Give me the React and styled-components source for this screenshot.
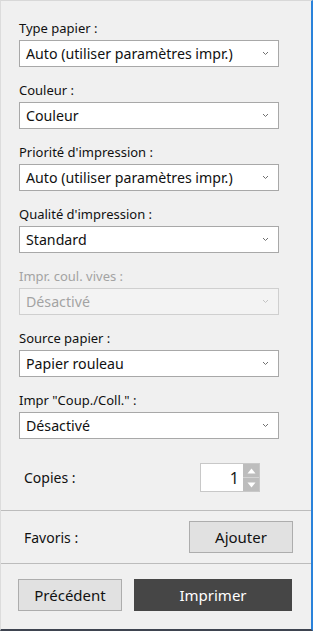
import React from "react";
import styled, { createGlobalStyle } from "styled-components";

const Global = createGlobalStyle`
  html, body { margin: 0; padding: 0; background: #f0f0f0; }
  body { font-family: "Noto Sans", "Liberation Sans", sans-serif; color: #1a1a1a; }
  * { box-sizing: border-box; }
`;

const Frame = styled.div`
  width: 313px;
  height: 631px;
  background: #f0f0f0;
  border-top: 1px solid #d8d8d8;
  border-left: 1px solid #dcdcdc;
  border-right: 2px solid #2a82da;
  border-bottom: 2px solid #3e4450;
  display: flex;
  flex-direction: column;
`;

const Fields = styled.div`
  display: flex;
  flex-direction: column;
  gap: 14px;
  padding: 18px 0 0 18px;
`;

const Field = styled.div`
  display: flex;
  flex-direction: column;
  gap: 3px;
`;

const Label = styled.div`
  font-size: 13px;
  line-height: 18px;
  height: 18px;
  color: ${(p) => (p.disabled ? "#a3a3a3" : "#111")};
`;

const Combo = styled.div`
  width: 260px;
  height: 27px;
  display: flex;
  align-items: center;
  justify-content: space-between;
  padding: 0 9px 0 6px;
  background: ${(p) => (p.disabled ? "#f3f3f3" : "#ffffff")};
  border: 1px solid ${(p) => (p.disabled ? "#cfcfcf" : "#a8a8a8")};
  font-size: 14.2px;
  color: ${(p) => (p.disabled ? "#a3a3a3" : "#111")};
`;

const Chevron = ({ disabled }) => (
  <svg width="7" height="5" viewBox="0 0 7 5">
    <polyline
      points="1,1 3.5,3.5 6,1"
      fill="none"
      stroke={disabled ? "#c4c4c4" : "#707070"}
      strokeWidth="1"
    />
  </svg>
);

const CopiesRow = styled.div`
  display: flex;
  align-items: center;
  justify-content: space-between;
  margin-top: 24px;
  padding: 0 51px 0 23px;
  height: 29px;
  margin-bottom: 18px;
`;

const RowLabel = styled.div`
  font-size: 14px;
  color: #111;
`;

const Spin = styled.div`
  width: 60px;
  height: 29px;
  display: flex;
  border: 1px solid #c8c8c8;
  background: #fff;
`;

const SpinValue = styled.div`
  flex: 1;
  display: flex;
  align-items: center;
  justify-content: flex-end;
  padding-right: 4px;
  font-size: 16px;
`;

const SpinButtons = styled.div`
  width: 16px;
  display: flex;
  flex-direction: column;
  background: #bdbdbd;
`;

const SpinBtn = styled.div`
  flex: 1;
  display: flex;
  align-items: center;
  justify-content: center;
  border-top: ${(p) => (p.down ? "1px solid #d4d4d4" : "none")};
`;

const Separator = styled.div`
  height: 1px;
  background: #bcbcbc;
`;

const FavRow = styled.div`
  display: flex;
  align-items: center;
  justify-content: space-between;
  padding: 10px 18px 10px 23px;
`;

const Button = styled.button`
  height: 32px;
  width: ${(p) => p.w}px;
  font-family: "Noto Sans", "Liberation Sans", sans-serif;
  font-size: 15px;
  color: ${(p) => (p.primary ? "#ffffff" : "#111")};
  background: ${(p) => (p.primary ? "#464646" : "#e1e1e1")};
  border: 1px solid ${(p) => (p.primary ? "#464646" : "#adadad")};
  padding: 0;
  margin: 0;
  cursor: pointer;
`;

const Footer = styled.div`
  display: flex;
  gap: 12px;
  padding: 15px 0 0 17px;
`;

const fields = [
  { label: "Type papier :", value: "Auto (utiliser paramètres impr.)" },
  { label: "Couleur :", value: "Couleur" },
  { label: "Priorité d'impression :", value: "Auto (utiliser paramètres impr.)" },
  { label: "Qualité d'impression :", value: "Standard" },
  { label: "Impr. coul. vives :", value: "Désactivé", disabled: true },
  { label: "Source papier :", value: "Papier rouleau" },
  { label: 'Impr "Coup./Coll." :', value: "Désactivé" },
];

export default function App() {
  return (
    <>
      <Global />
      <Frame>
        <Fields>
          {fields.map((f) => (
            <Field key={f.label}>
              <Label disabled={f.disabled}>{f.label}</Label>
              <Combo disabled={f.disabled}>
                <span>{f.value}</span>
                <Chevron disabled={f.disabled} />
              </Combo>
            </Field>
          ))}
        </Fields>
        <CopiesRow>
          <RowLabel>Copies :</RowLabel>
          <Spin>
            <SpinValue>1</SpinValue>
            <SpinButtons>
              <SpinBtn>
                <svg width="9" height="6" viewBox="0 0 9 6">
                  <polygon points="0.5,5.5 4.5,0.5 8.5,5.5" fill="#fff" />
                </svg>
              </SpinBtn>
              <SpinBtn down>
                <svg width="9" height="6" viewBox="0 0 9 6">
                  <polygon points="0.5,0.5 8.5,0.5 4.5,5.5" fill="#fff" />
                </svg>
              </SpinBtn>
            </SpinButtons>
          </Spin>
        </CopiesRow>
        <Separator />
        <FavRow>
          <RowLabel>Favoris :</RowLabel>
          <Button w={104}>Ajouter</Button>
        </FavRow>
        <Separator />
        <Footer>
          <Button w={104}>Précédent</Button>
          <Button w={158} primary>Imprimer</Button>
        </Footer>
      </Frame>
    </>
  );
}
